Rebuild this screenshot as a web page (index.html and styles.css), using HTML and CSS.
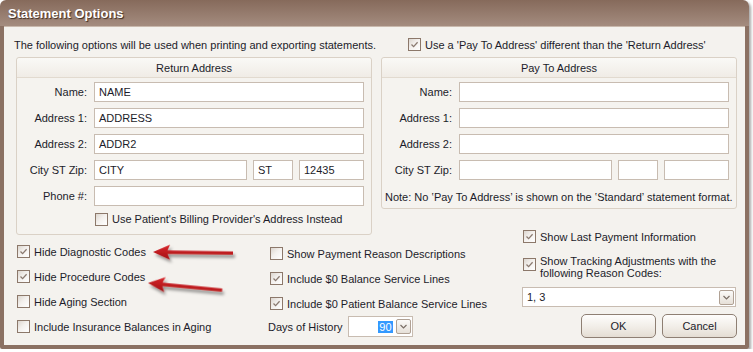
FILE: index.html
```html
<!DOCTYPE html>
<html>
<head>
<meta charset="utf-8">
<title>Statement Options</title>
<link rel="stylesheet" href="styles.css">
</head>
<body>
<div class="window">
  <div class="titlebar"><span class="title">Statement Options</span></div>
  <div class="client">
    <div class="top-row">
      <div class="intro">The following options will be used when printing and exporting statements.</div>
      <label class="chk top-chk"><span class="box checked"><svg viewBox="0 0 11 11"><path d="M2.5 5.5 L4.6 7.6 L8.6 3.2"/></svg></span><span>Use a 'Pay To Address' different than the 'Return Address'</span></label>
    </div>
    <div class="columns">
      <div class="col-left">
        <div class="group group-return">
          <div class="group-head">Return Address</div>
          <div class="group-body">
            <div class="field"><span class="lbl">Name:</span><div class="inp">NAME</div></div>
            <div class="field"><span class="lbl">Address 1:</span><div class="inp">ADDRESS</div></div>
            <div class="field"><span class="lbl">Address 2:</span><div class="inp">ADDR2</div></div>
            <div class="field"><span class="lbl">City ST Zip:</span><div class="city"><div class="inp">CITY</div><div class="inp">ST</div><div class="inp">12435</div></div></div>
            <div class="field"><span class="lbl">Phone #:</span><div class="inp"></div></div>
            <label class="chk billing-chk"><span class="box"></span><span>Use Patient's Billing Provider's Address Instead</span></label>
          </div>
        </div>
        <div class="left-bottom">
          <div class="chk-col first-col">
            <label class="chk"><span class="box checked"><svg viewBox="0 0 11 11"><path d="M2.5 5.5 L4.6 7.6 L8.6 3.2"/></svg></span><span>Hide Diagnostic Codes</span></label>
            <label class="chk"><span class="box checked"><svg viewBox="0 0 11 11"><path d="M2.5 5.5 L4.6 7.6 L8.6 3.2"/></svg></span><span>Hide Procedure Codes</span></label>
            <label class="chk"><span class="box"></span><span>Hide Aging Section</span></label>
            <label class="chk"><span class="box"></span><span>Include Insurance Balances in Aging</span></label>
          </div>
          <div class="chk-col mid-col">
            <label class="chk"><span class="box"></span><span>Show Payment Reason Descriptions</span></label>
            <label class="chk"><span class="box checked"><svg viewBox="0 0 11 11"><path d="M2.5 5.5 L4.6 7.6 L8.6 3.2"/></svg></span><span>Include $0 Balance Service Lines</span></label>
            <label class="chk"><span class="box checked"><svg viewBox="0 0 11 11"><path d="M2.5 5.5 L4.6 7.6 L8.6 3.2"/></svg></span><span>Include $0 Patient Balance Service Lines</span></label>
            <div class="days-row">
              <span>Days of History</span>
              <div class="spin"><span class="sel">90</span><span class="dd"><svg viewBox="0 0 13 13"><path d="M3.5 5 L6.5 8 L9.5 5"/></svg></span></div>
            </div>
          </div>
        </div>
      </div>
      <div class="col-right">
        <div class="group group-pay">
          <div class="group-head">Pay To Address</div>
          <div class="group-body">
            <div class="field"><span class="lbl">Name:</span><div class="inp"></div></div>
            <div class="field"><span class="lbl">Address 1:</span><div class="inp"></div></div>
            <div class="field"><span class="lbl">Address 2:</span><div class="inp"></div></div>
            <div class="field"><span class="lbl">City ST Zip:</span><div class="city"><div class="inp"></div><div class="inp"></div><div class="inp"></div></div></div>
            <div class="note">Note: No ‛Pay To Address’ is shown on the ‛Standard’ statement format.</div>
          </div>
        </div>
        <div class="right-bottom">
          <label class="chk"><span class="box checked"><svg viewBox="0 0 11 11"><path d="M2.5 5.5 L4.6 7.6 L8.6 3.2"/></svg></span><span>Show Last Payment Information</span></label>
          <label class="chk two-line"><span class="box checked"><svg viewBox="0 0 11 11"><path d="M2.5 5.5 L4.6 7.6 L8.6 3.2"/></svg></span><span>Show Tracking Adjustments with the<br>following Reason Codes:</span></label>
          <div class="combo"><span>1, 3</span><span class="dd"><svg viewBox="0 0 13 13"><path d="M3.5 5 L6.5 8 L9.5 5"/></svg></span></div>
          <div class="buttons">
            <div class="btn">OK</div>
            <div class="btn">Cancel</div>
          </div>
        </div>
      </div>
    </div>
  </div>
  <svg class="arrows" viewBox="0 0 753 352" width="753" height="352">
    <defs>
      <filter id="sh" x="-20%" y="-50%" width="140%" height="200%">
        <feDropShadow dx="2" dy="3" stdDeviation="1.6" flood-color="#000" flood-opacity="0.4"/>
      </filter>
      <linearGradient id="rg" x1="0" y1="0" x2="0" y2="1">
        <stop offset="0" stop-color="#d9262b"/>
        <stop offset="1" stop-color="#a50f14"/>
      </linearGradient>
    </defs>
    <g filter="url(#sh)" transform="translate(153,252) rotate(0.7)">
      <path d="M0 0 L17 -7.5 L14.5 -1.8 L80 -1.6 L80 1.8 L14.5 1.8 L17 7.5 Z" fill="url(#rg)"/>
    </g>
    <g filter="url(#sh)" transform="translate(148,283) rotate(5.4)">
      <path d="M0 0 L17 -7.5 L14.5 -1.8 L74.5 -1.6 L74.5 1.8 L14.5 1.8 L17 7.5 Z" fill="url(#rg)"/>
    </g>
  </svg>
</div>
</body>
</html>
```
FILE: styles.css
```css
* { box-sizing: border-box; }
html, body { margin: 0; padding: 0; background: #ffffff; }
body {
  font-family: "Liberation Sans", Arial, sans-serif;
  font-size: 11px;
  color: #1c1c2a;
}
.window {
  position: relative;
  width: 749px;
  height: 349px;
  border-radius: 6px 6px 2px 2px;
  background: linear-gradient(#866a5b 0, #a48c7f 26px, #8b7163 26px, #8b7163 100%);
  padding: 0 4px 4px 4px;
  box-shadow: 2px 2px 3px rgba(0,0,0,0.35);
  display: flex;
  flex-direction: column;
}
.titlebar {
  height: 26px;
  flex: none;
  display: flex;
  align-items: center;
  padding-left: 4px;
}
.title {
  font-weight: bold;
  font-size: 13px;
  color: #ffffff;
  text-shadow: 1px 1px 1px #3b2a20;
}
.client {
  flex: 1;
  background: #f4f2ee;
  border-top: 1px solid #c9b9ad;
  padding: 9px 0 0 12px;
  display: flex;
  flex-direction: column;
}
.top-row {
  display: grid;
  grid-template-columns: 356px 356px;
  column-gap: 9px;
  height: 17px;
  align-items: center;
}
.intro { margin-left: -2px; white-space: nowrap; }
.top-chk { margin-left: 27px; }

.chk {
  display: flex;
  align-items: center;
  gap: 4px;
  white-space: nowrap;
}
.box {
  width: 13px;
  height: 13px;
  flex: none;
  border: 1px solid #8c786a;
  background: linear-gradient(135deg, #dcd6cf 0%, #f3f0ed 45%, #ffffff 100%);
  display: block;
}
.box svg { display: block; width: 11px; height: 11px; }
.box svg path { fill: none; stroke: #8a7a70; stroke-width: 1.3; }

.columns {
  display: flex;
  gap: 9px;
  margin-top: 4px;
}
.col-left, .col-right { width: 356px; flex: none; display: flex; flex-direction: column; }

.group {
  border: 1px solid #dad1c6;
  border-radius: 3px;
  background: #f5f3ef;
}
.group-head {
  height: 20px;
  border-bottom: 1px solid #e2dacf;
  background: linear-gradient(#faf9f6, #f0ece6);
  border-radius: 3px 3px 0 0;
  display: flex;
  align-items: center;
  justify-content: center;
}
.group-body {
  padding: 4px 7px 8px 0;
  display: flex;
  flex-direction: column;
  gap: 6px;
}
.group-pay .group-body { padding-bottom: 4px; }
.field {
  display: grid;
  grid-template-columns: 77px 270px;
  align-items: center;
  height: 20px;
}
.lbl { text-align: right; padding-right: 7px; }
.inp {
  height: 20px;
  border: 1px solid #c8bcb1;
  background: #ffffff;
  padding: 0 4px;
  display: flex;
  align-items: center;
}
.city {
  display: grid;
  grid-template-columns: 153px 40px 65px;
  column-gap: 6px;
}
.billing-chk { margin-left: 78px; height: 14px; }
.note { margin-top: 5px; padding-left: 3px; height: 13px; line-height: 13px; white-space: nowrap; }

.left-bottom { display: flex; }
.chk-col { display: flex; flex-direction: column; gap: 12px; flex: none; }
.chk-col .chk { height: 13px; }
.first-col { padding: 10px 0 0 1px; width: 252px; }
.mid-col { padding-top: 12px; }
.mid-col .chk { margin-left: 2px; }
.days-row {
  display: flex;
  align-items: center;
  gap: 5px;
  margin-top: -6px;
  height: 21px;
}
.spin {
  width: 65px;
  height: 21px;
  border: 1px solid #c8bcb1;
  background: #ffffff;
  display: flex;
  align-items: center;
  justify-content: flex-end;
  padding-right: 1px;
  gap: 3px;
}
.sel { background: #3399ff; color: #ffffff; padding: 0 1px; line-height: 12px; }
.dd {
  width: 15px;
  height: 15px;
  border: 1px solid #b0a194;
  border-radius: 2px;
  background: linear-gradient(#fbfaf8, #e6e0d8);
  display: block;
}
.dd svg { display: block; width: 13px; height: 13px; }
.dd svg path { fill: none; stroke: #7a6e66; stroke-width: 1.2; }

.right-bottom { padding: 21px 0 0 141px; display: flex; flex-direction: column; }
.right-bottom .chk { margin-left: 1px; height: 13px; }
.right-bottom .two-line { margin-top: 12px; align-items: flex-start; height: auto; line-height: 12px; }
.two-line .box { margin-top: 3px; }
.combo {
  margin-top: 8px;
  width: 214px;
  height: 20px;
  border: 1px solid #c8bcb1;
  background: #ffffff;
  display: flex;
  align-items: center;
  justify-content: space-between;
  padding: 0 1px 0 4px;
}
.buttons {
  margin-top: 7px;
  display: flex;
  justify-content: flex-end;
  gap: 6px;
}
.btn {
  width: 75px;
  height: 24px;
  border: 1px solid #8e7f73;
  border-radius: 5px;
  background: linear-gradient(#fefdfc, #f1ede7 55%, #e4ddd3);
  display: flex;
  align-items: center;
  justify-content: center;
}
.arrows { position: absolute; left: 0; top: 0; pointer-events: none; }
.arrows path { stroke: none; }
```
